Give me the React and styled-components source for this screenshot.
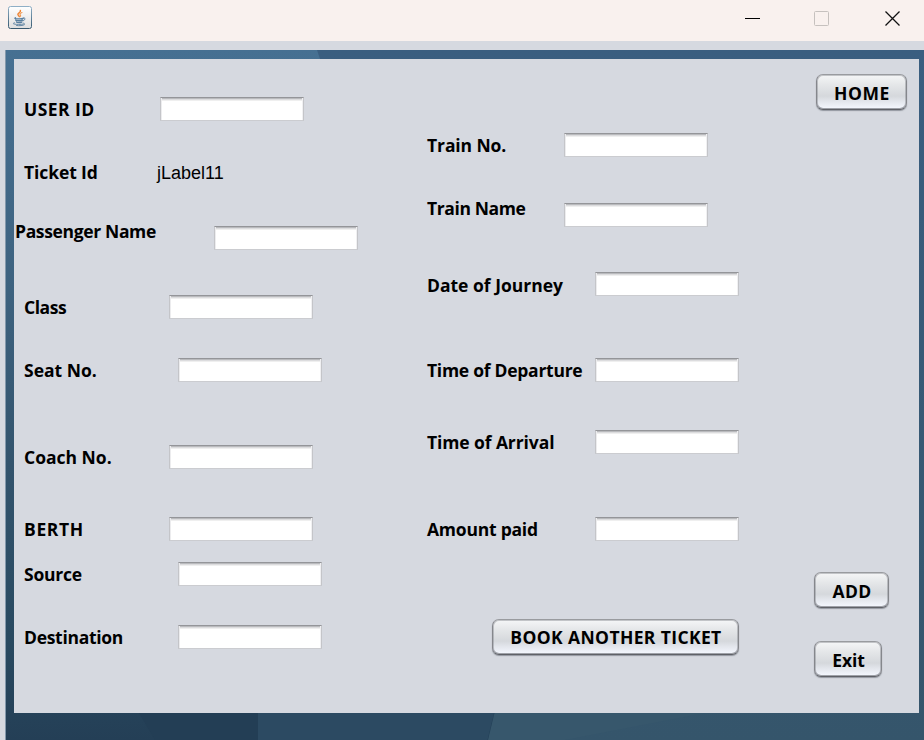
import React from 'react';
import styled, { createGlobalStyle } from 'styled-components';

const GlobalStyle = createGlobalStyle`
  *, *::before, *::after { box-sizing: border-box; }
  body { margin: 0; overflow: hidden; background: #d6d9e0; }
`;

const Window = styled.div`
  display: flex;
  flex-direction: column;
  width: 924px;
  height: 740px;
  overflow: hidden;
  background: #d6d9e0;
  color: #000;
  font-family: "Open Sans", "Noto Sans", sans-serif;
`;

const TitleBar = styled.header`
  display: flex;
  align-items: flex-start;
  justify-content: space-between;
  flex: none;
  height: 41px;
  padding: 6px 23px 0 8px;
  background: #f9f1ee;
`;

const WindowControls = styled.div`
  display: flex;
  gap: 53px;
  padding-top: 4px;
`;

const ControlIcon = styled.svg`
  display: block;
  width: 17px;
  height: 17px;
`;

const Frame = styled.main`
  position: relative;
  isolation: isolate;
  flex: 1;
  margin: 9px 0 0 5px;
  padding: 9px 5px 27px 9px;
`;

const Wallpaper = styled.svg`
  position: absolute;
  inset: 0;
  z-index: -1;
  display: block;
`;

const Panel = styled.section`
  display: grid;
  grid-template-columns: 413px 387px 1fr;
  height: 654px;
  background: #d6d9e0;
`;

const Column = styled.div`
  display: flex;
  flex-direction: column;
  align-items: flex-start;
`;

const Row = styled.div`
  display: flex;
  align-items: flex-start;
  height: 24px;
  margin-top: ${(p) => p.$gap}px;
  padding-left: ${(p) => p.$indent}px;
`;

const Label = styled.label`
  flex: none;
  width: ${(p) => p.$width}px;
  margin-top: ${(p) => p.$drop}px;
  font-size: 17.5px;
  font-weight: 700;
  line-height: 24px;
  letter-spacing: ${(p) => p.$tracking}px;
  white-space: nowrap;
`;

const Value = styled.span`
  margin-top: 1px;
  font: 18px/24px "Liberation Sans", Arial, sans-serif;
`;

const TextField = styled.input`
  display: block;
  width: 144px;
  height: 24px;
  margin: 0;
  padding: 4px 6px;
  border: 1px solid #c4c5c9;
  border-top-color: #949599;
  border-bottom-color: #cbccd0;
  border-radius: 0;
  outline: none;
  background: linear-gradient(#b9babd 0 1px, #dcdcde 1px 2px, #efefef 2px 3px, #fff 3px);
  box-shadow: inset 1px 0 #ececee, inset -1px 0 #f0f0f2;
  font: 17px "Liberation Sans", sans-serif;
`;

const Button = styled.button`
  flex: none;
  width: ${(p) => p.$width}px;
  height: 36px;
  margin: ${(p) => p.$gap}px 0 0 ${(p) => p.$indent || 0}px;
  padding: ${(p) => (p.$raised ? '0 0 1px 1px' : '1px 0 0 1px')};
  border: 1px solid;
  border-color: #999b9f #85878c #5f6167 #85878c;
  border-radius: 7px;
  background: linear-gradient(#f5f6f7 0%, #e5e7e9 28%, #d5d8dc 62%, #e3e6ec 78%, #f5f8ff 100%);
  box-shadow: inset 0 0 0 1px rgba(120, 123, 130, 0.4), inset 0 -1px 0 rgba(95, 98, 104, 0.4), 0 1px 1px rgba(80, 85, 95, 0.5);
  color: #000;
  font: 700 17.5px/32px "Open Sans", "Noto Sans", sans-serif;
  letter-spacing: ${(p) => p.$tracking}px;
  white-space: nowrap;
`;

const leftFields = [
  { label: 'USER ID', gap: 38, width: 136, tracking: 0.43 },
  { label: 'Ticket Id', gap: 39, width: 133, tracking: -0.1, value: 'jLabel11' },
  { label: 'Passenger Name', gap: 42, indent: 1, width: 199, drop: -7, tracking: -0.35 },
  { label: 'Class', gap: 45, width: 145, tracking: -0.45 },
  { label: 'Seat No.', gap: 39, width: 154 },
  { label: 'Coach No.', gap: 63, width: 145 },
  { label: 'BERTH', gap: 48, width: 145, tracking: 0.65 },
  { label: 'Source', gap: 21, width: 154, tracking: -0.25 },
  { label: 'Destination', gap: 39, width: 154, tracking: -0.3 },
];

const journeyFields = [
  { label: 'Train No.', gap: 74, indent: 0, width: 137, tracking: -0.1 },
  { label: 'Train Name', gap: 46, indent: 0, width: 137, drop: -7, tracking: -0.4 },
  { label: 'Date of Journey', gap: 45, indent: 0, width: 168, drop: 1 },
  { label: 'Time of Departure', gap: 62, indent: 0, width: 168, tracking: -0.27 },
  { label: 'Time of Arrival', gap: 48, indent: 0, width: 168, tracking: -0.1 },
  { label: 'Amount paid', gap: 63, indent: 0, width: 168, tracking: -0.23 },
];

function FormRow({ label, gap, width, indent = 10, drop = 0, tracking = 0, value }) {
  return (
    <Row $gap={gap} $indent={indent}>
      <Label $width={width} $drop={drop} $tracking={tracking}>{label}</Label>
      {value ? <Value>{value}</Value> : <TextField aria-label={label} />}
    </Row>
  );
}

function JavaIcon() {
  return (
    <svg width="24" height="24" viewBox="0 0 24 24" fill="none">
      <defs>
        <linearGradient id="tile" x2="0" y2="1">
          <stop offset="0" stopColor="#fff" />
          <stop offset="1" stopColor="#dedede" />
        </linearGradient>
        <linearGradient id="tileEdge" x2="0" y2="1">
          <stop offset="0" stopColor="#8fafc6" />
          <stop offset="1" stopColor="#36586f" />
        </linearGradient>
      </defs>
      <rect x="0.5" y="0.5" width="23" height="22" rx="2" fill="url(#tile)" stroke="url(#tileEdge)" />
      <g strokeLinecap="round">
        <path d="M12.400 4.500c.7 2-2.800 2.400-2.500 4 .1.800 1 1.200 1.500 2" stroke="#ee8434" strokeWidth="1.500" />
        <path d="M14 6.600c-2 .8-2.500 1.500-1.700 2.300.6.600.3 1.200-.3 1.700" stroke="#f09a52" strokeWidth="1.100" />
        <g stroke="#587f9f">
          <path d="M7.500 11.800c-2 .9 1 1.200 4 1.100 1.600 0 3-.2 3.700-.5M7.600 14c.3 1 5.500 1 7 .1M8.500 16c.3.900 4 .9 5.300.1" strokeWidth="1.300" />
          <path d="M15.300 11.900c2.200-.7 2.800 2-.5 3" />
          <path d="M6.500 16.800c-4 1.200 1.500 1.700 5.500 1.600 3.500-.1 5.500-.8 4-1.400M8.500 19.500c3 .4 6.500.2 8-.8" strokeWidth=".9" />
        </g>
      </g>
    </svg>
  );
}

function FrameBackdrop() {
  return (
    <Wallpaper width="919" height="690" viewBox="0 0 919 690" preserveAspectRatio="none">
      <defs>
        <linearGradient id="light" x2="0" y2="1">
          <stop offset="0" stopColor="#467092" />
          <stop offset=".35" stopColor="#3d627f" />
          <stop offset=".6" stopColor="#33546d" />
          <stop offset=".85" stopColor="#294a61" />
          <stop offset="1" stopColor="#243f56" />
        </linearGradient>
        <linearGradient id="deep" x2="0" y2="1">
          <stop offset="0" stopColor="#3a5e80" />
          <stop offset="1" stopColor="#35556b" />
        </linearGradient>
      </defs>
      <rect width="919" height="690" fill="url(#light)" />
      <path d="M312 0H919V690H484L600 300 315 9Z" fill="url(#deep)" />
      <path d="M253 663H489L482.500 690H253Z" fill="#2c4a62" />
      <path d="M489.500 663H700L560 690H483Z" fill="#37576c" />
      <path d="M134 663H253V690H150Z" fill="#233e55" />
      <path d="M.5 0V690" stroke="#8499ac" />
    </Wallpaper>
  );
}

export default function App() {
  return (
    <>
      <GlobalStyle />
      <Window>
        <TitleBar>
          <JavaIcon />
          <WindowControls>
            <ControlIcon viewBox="0 0 17 17"><path d="M1 8.500H16" stroke="#000" /></ControlIcon>
            <ControlIcon viewBox="0 0 17 17"><rect x="0.500" y="1.500" width="14" height="14" rx="1" fill="none" stroke="#c6c1be" /></ControlIcon>
            <ControlIcon viewBox="0 0 17 17"><path d="M1.500 1.500L15.500 15.500M15.500 1.500L1.500 15.500" stroke="#111" strokeWidth="1.300" /></ControlIcon>
          </WindowControls>
        </TitleBar>
        <Frame>
          <FrameBackdrop />
          <Panel>
            <Column>
              {leftFields.map((f) => <FormRow key={f.label} {...f} />)}
            </Column>
            <Column>
              {journeyFields.map((f) => <FormRow key={f.label} {...f} />)}
              <Button $width={247} $gap={78} $indent={65} $tracking={0.38} $raised>BOOK ANOTHER TICKET</Button>
            </Column>
            <Column>
              <Button $width={91} $gap={15} $indent={2} $tracking={0.6}>HOME</Button>
              <Button $width={75} $gap={462} $tracking={0.4}>ADD</Button>
              <Button $width={68} $gap={33} $tracking={-0.1}>Exit</Button>
            </Column>
          </Panel>
        </Frame>
      </Window>
    </>
  );
}
